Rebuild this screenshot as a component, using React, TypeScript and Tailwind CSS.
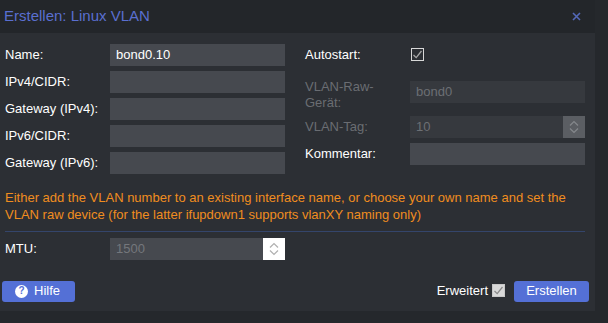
import React from 'react';

const font = { fontFamily: '"Liberation Sans", Arial, sans-serif' };

function Chevrons({ color }: { color: string }) {
  return (
    <svg width="12" height="18" viewBox="0 0 12 18" fill="none" stroke={color} strokeWidth="1.2">
      <path d="M2 7.5 L6 3.5 L10 7.5" />
      <path d="M2 10.5 L6 14.5 L10 10.5" />
    </svg>
  );
}

function Check({ bg, border, tick }: { bg: string; border: string; tick: string }) {
  return (
    <span
      className="inline-flex h-[13px] w-[13px] items-center justify-center border"
      style={{ background: bg, borderColor: border }}
    >
      <svg width="11" height="11" viewBox="0 0 11 11" fill="none" stroke={tick} strokeWidth="1.3">
        <path d="M1.5 6 L4.2 8.6 L9.5 2" />
      </svg>
    </span>
  );
}

function Field({ value, disabled }: { value?: string; disabled?: boolean }) {
  return (
    <div
      className={`flex h-[22px] w-[175px] items-center px-[6px] text-[13px] ${
        disabled ? 'bg-[#36393e] text-[#6c6f74]' : 'bg-[#46494f] text-white'
      }`}
    >
      {value}
    </div>
  );
}

function Label({ children, disabled }: { children: React.ReactNode; disabled?: boolean }) {
  return (
    <div className={`w-[105px] text-[13px] leading-[16px] ${disabled ? 'text-[#6a6d72]' : 'text-white'}`}>
      {children}
    </div>
  );
}

export default function App() {
  return (
    <div className="h-[323px] w-[608px] bg-[#25282c] overflow-hidden" style={font}>
      <div className="flex h-[311px] w-[595px] flex-col bg-[#2c2f34]">
        {/* Header */}
        <div className="flex h-[33px] items-center justify-between bg-[#23262a] pl-[4px] pr-[14px]">
          <span className="text-[15px] text-[#5a6fd0]">Erstellen: Linux VLAN</span>
          <svg width="9" height="9" viewBox="0 0 9 9" stroke="#5468b8" strokeWidth="1.6">
            <path d="M1 1 L8 8 M8 1 L1 8" />
          </svg>
        </div>

        {/* Body */}
        <div className="flex flex-1 flex-col pl-[5px] pr-[10px] pt-[11px]">
          <div className="flex gap-[20px]">
            <div className="flex flex-col gap-[5px]">
              <div className="flex items-center">
                <Label>Name:</Label>
                <Field value="bond0.10" />
              </div>
              <div className="flex items-center">
                <Label>IPv4/CIDR:</Label>
                <Field />
              </div>
              <div className="flex items-center">
                <Label>Gateway (IPv4):</Label>
                <Field />
              </div>
              <div className="flex items-center">
                <Label>IPv6/CIDR:</Label>
                <Field />
              </div>
              <div className="flex items-center">
                <Label>Gateway (IPv6):</Label>
                <Field />
              </div>
            </div>

            <div className="flex flex-col gap-[5px]">
              <div className="flex h-[22px] items-center">
                <Label>Autostart:</Label>
                <div className="pl-[1px]">
                  <Check bg="#2c2f34" border="#d8d8d8" tick="#a8a8a8" />
                </div>
              </div>
              <div className="flex h-[40px] items-start">
                <div className="pt-[8px]">
                  <Label disabled>
                    VLAN-Raw-
                    <br />
                    Gerät:
                  </Label>
                </div>
                <div className="mt-[10px]">
                  <Field value="bond0" disabled />
                </div>
              </div>
              <div className="flex items-center">
                <Label disabled>VLAN-Tag:</Label>
                <div className="flex h-[22px] w-[175px] items-center bg-[#36393e] text-[13px] text-[#6c6f74]">
                  <span className="flex-1 px-[6px]">10</span>
                  <div className="flex h-full w-[22px] items-center justify-center bg-[#5b5e63]">
                    <Chevrons color="#85888c" />
                  </div>
                </div>
              </div>
              <div className="flex items-center">
                <Label>Kommentar:</Label>
                <Field />
              </div>
            </div>
          </div>

          <div className="mt-[15px] text-[13px] leading-[17px] text-[#f08d1f]">
            <div className="whitespace-nowrap">
              Either add the VLAN number to an existing interface name, or choose your own name and set the
            </div>
            <div className="whitespace-nowrap">
              VLAN raw device (for the latter ifupdown1 supports vlanXY naming only)
            </div>
          </div>

          <div className="mt-[8px] h-px w-[580px] bg-[#34456b]" />

          <div className="mt-[6px] flex items-center">
            <Label>MTU:</Label>
            <div className="flex h-[22px] w-[175px] items-center bg-[#46494f] text-[13px] text-[#74777c]">
              <span className="flex-1 px-[6px]">1500</span>
              <div className="flex h-full w-[22px] items-center justify-center bg-white">
                <Chevrons color="#b0b0b0" />
              </div>
            </div>
          </div>

          <div className="mt-auto mb-[8px] flex items-center justify-between">
            <button className="-ml-[3px] flex h-[21px] w-[73px] items-center gap-[6px] rounded-[3px] bg-[#5470d6] pl-[13px] text-[13px] text-white">
              <span className="flex h-[13px] w-[13px] items-center justify-center rounded-full bg-white text-[10px] font-bold leading-none text-[#5470d6]">
                ?
              </span>
              Hilfe
            </button>
            <div className="-mr-[4px] flex items-center">
              <span className="text-[13px] text-white">Erweitert</span>
              <span className="ml-[4px] mr-[9px]">
                <Check bg="#d9d9d9" border="#c8c8c8" tick="#8a8a8a" />
              </span>
              <button className="h-[21px] w-[75px] rounded-[3px] bg-[#5470d6] text-[13px] text-white">
                Erstellen
              </button>
            </div>
          </div>
        </div>
      </div>
    </div>
  );
}
